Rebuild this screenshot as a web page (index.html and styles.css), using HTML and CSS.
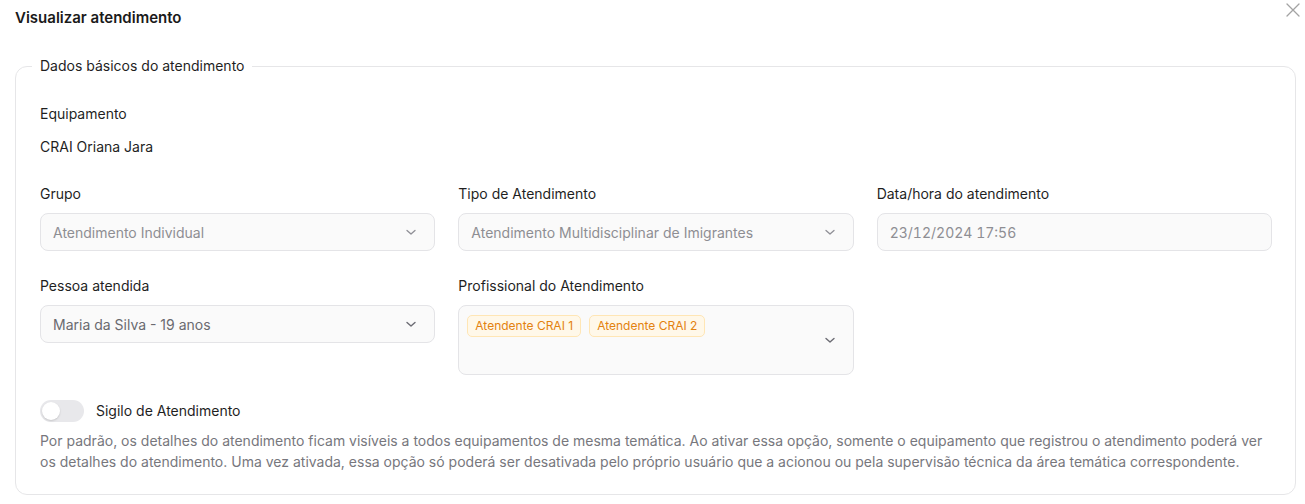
FILE: index.html
```html
<!DOCTYPE html>
<html lang="pt-BR">
<head>
<meta charset="utf-8">
<title>Visualizar atendimento</title>
<link rel="stylesheet" href="styles.css">
</head>
<body>
<div class="modal">
  <header class="modal-header">
    <h1 class="modal-title">Visualizar atendimento</h1>
    <button class="close-btn" aria-label="Fechar">
      <svg width="14" height="14" viewBox="0 0 14 14"><path d="M1 1L13 13M13 1L1 13" stroke="#a3a3a3" stroke-width="1.3" fill="none" stroke-linecap="round"/></svg>
    </button>
  </header>
  <fieldset class="panel">
    <legend class="panel-legend">Dados básicos do atendimento</legend>
    <div class="field-static">
      <div class="label">Equipamento</div>
      <div class="value">CRAI Oriana Jara</div>
    </div>
    <div class="grid">
      <div class="field">
        <div class="label">Grupo</div>
        <div class="input select">
          <span class="input-text">Atendimento Individual</span>
          <svg class="chev" width="12" height="12" viewBox="0 0 12 12"><path d="M2 4.5L6 8L10 4.5" stroke="#8f8f96" stroke-width="1.3" fill="none" stroke-linecap="round" stroke-linejoin="round"/></svg>
        </div>
      </div>
      <div class="field">
        <div class="label">Tipo de Atendimento</div>
        <div class="input select">
          <span class="input-text">Atendimento Multidisciplinar de Imigrantes</span>
          <svg class="chev" width="12" height="12" viewBox="0 0 12 12"><path d="M2 4.5L6 8L10 4.5" stroke="#8f8f96" stroke-width="1.3" fill="none" stroke-linecap="round" stroke-linejoin="round"/></svg>
        </div>
      </div>
      <div class="field">
        <div class="label">Data/hora do atendimento</div>
        <div class="input">
          <span class="input-text date">23/12/2024 17:56</span>
        </div>
      </div>
      <div class="field">
        <div class="label">Pessoa atendida</div>
        <div class="input select">
          <span class="input-text dark">Maria da Silva - 19 anos</span>
          <svg class="chev" width="12" height="12" viewBox="0 0 12 12"><path d="M2 4.5L6 8L10 4.5" stroke="#6b6b73" stroke-width="1.4" fill="none" stroke-linecap="round" stroke-linejoin="round"/></svg>
        </div>
      </div>
      <div class="field">
        <div class="label">Profissional do Atendimento</div>
        <div class="input multi">
          <div class="tags">
            <span class="tag">Atendente CRAI 1</span>
            <span class="tag">Atendente CRAI 2</span>
          </div>
          <svg class="chev" width="12" height="12" viewBox="0 0 12 12"><path d="M2 4.5L6 8L10 4.5" stroke="#6b6b73" stroke-width="1.4" fill="none" stroke-linecap="round" stroke-linejoin="round"/></svg>
        </div>
      </div>
    </div>
    <div class="switch-row">
      <span class="switch"><span class="knob"></span></span>
      <span class="switch-label">Sigilo de Atendimento</span>
    </div>
    <p class="help">Por padrão, os detalhes do atendimento ficam visíveis a todos equipamentos de mesma temática. Ao ativar essa opção, somente o equipamento que registrou o atendimento poderá ver os detalhes do atendimento. Uma vez ativada, essa opção só poderá ser desativada pelo próprio usuário que a acionou ou pela supervisão técnica da área temática correspondente.</p>
  </fieldset>
</div>
</body>
</html>
```

FILE: styles.css
```css
* { box-sizing: border-box; }
html, body {
  margin: 0;
  padding: 0;
  background: #ffffff;
}
body {
  font-family: Inter, "Noto Sans", "Liberation Sans", sans-serif;
  color: #1f1f1f;
  font-size: 14px;
}
.modal {
  position: relative;
  padding: 7px 9px 0 15px;
}
.modal-header {
  display: flex;
  align-items: center;
  justify-content: space-between;
  height: 22px;
  margin-bottom: 27px;
}
.modal-title {
  margin: 0;
  font-size: 15px;
  font-weight: 600;
  line-height: 22px;
  color: #1a1a1a;
}
.close-btn {
  position: absolute;
  top: 3px;
  right: 5px;
  border: 0;
  background: none;
  padding: 0;
  width: 14px;
  height: 14px;
  cursor: pointer;
}
.panel {
  margin: 0;
  border: 1px solid #e6e6e8;
  border-radius: 12px;
  padding: 27px 23px 22px 24px;
  min-width: 0;
}
.panel-legend {
  padding: 0 8px;
  margin-left: -8px;
  font-size: 14px;
  line-height: 20px;
  color: #1f1f1f;
}
.label {
  font-size: 14px;
  line-height: 22px;
  color: #1f1f1f;
}
.field-static .value {
  margin-top: 11px;
  line-height: 22px;
  color: #1f1f1f;
}
.grid {
  margin-top: 25px;
  display: grid;
  grid-template-columns: repeat(3, 1fr);
  column-gap: 23px;
  row-gap: 24px;
  align-items: start;
}
.field .label {
  margin-bottom: 8px;
}
.input {
  display: flex;
  align-items: center;
  justify-content: space-between;
  height: 38px;
  border: 1px solid #e4e4e7;
  border-radius: 8px;
  background: #fafafa;
  padding: 0 17px 0 12px;
}
.input-text {
  color: #8e8e93;
  font-size: 14px;
  white-space: nowrap;
  overflow: hidden;
}
.input-text.date {
  font-variant-numeric: tabular-nums;
}
.input-text.dark {
  color: #6a6a70;
}
.chev { flex: none; }
.multi {
  height: 70px;
  align-items: center;
  padding: 0 17px 0 8px;
}
.tags {
  align-self: flex-start;
  display: flex;
  gap: 8px;
  padding-top: 9px;
}
.tag {
  display: inline-block;
  height: 22px;
  line-height: 20px;
  padding: 0 7px;
  font-size: 12px;
  color: #e3820f;
  background: #fff8e9;
  border: 1px solid #ffe6b5;
  border-radius: 5px;
}
.switch-row {
  display: flex;
  align-items: center;
  gap: 12px;
  margin-top: 25px;
}
.switch {
  position: relative;
  display: inline-block;
  width: 44px;
  height: 22px;
  border-radius: 11px;
  background: #e8e8eb;
}
.knob {
  position: absolute;
  top: 2px;
  left: 2px;
  width: 18px;
  height: 18px;
  border-radius: 50%;
  background: #ffffff;
  box-shadow: 0 1px 2px rgba(0,0,0,0.15);
}
.switch-label {
  font-size: 14px;
  line-height: 22px;
  color: #1f1f1f;
}
.help {
  margin: 8px 0 0;
  font-size: 14px;
  line-height: 21px;
  color: #77777d;
}
```
